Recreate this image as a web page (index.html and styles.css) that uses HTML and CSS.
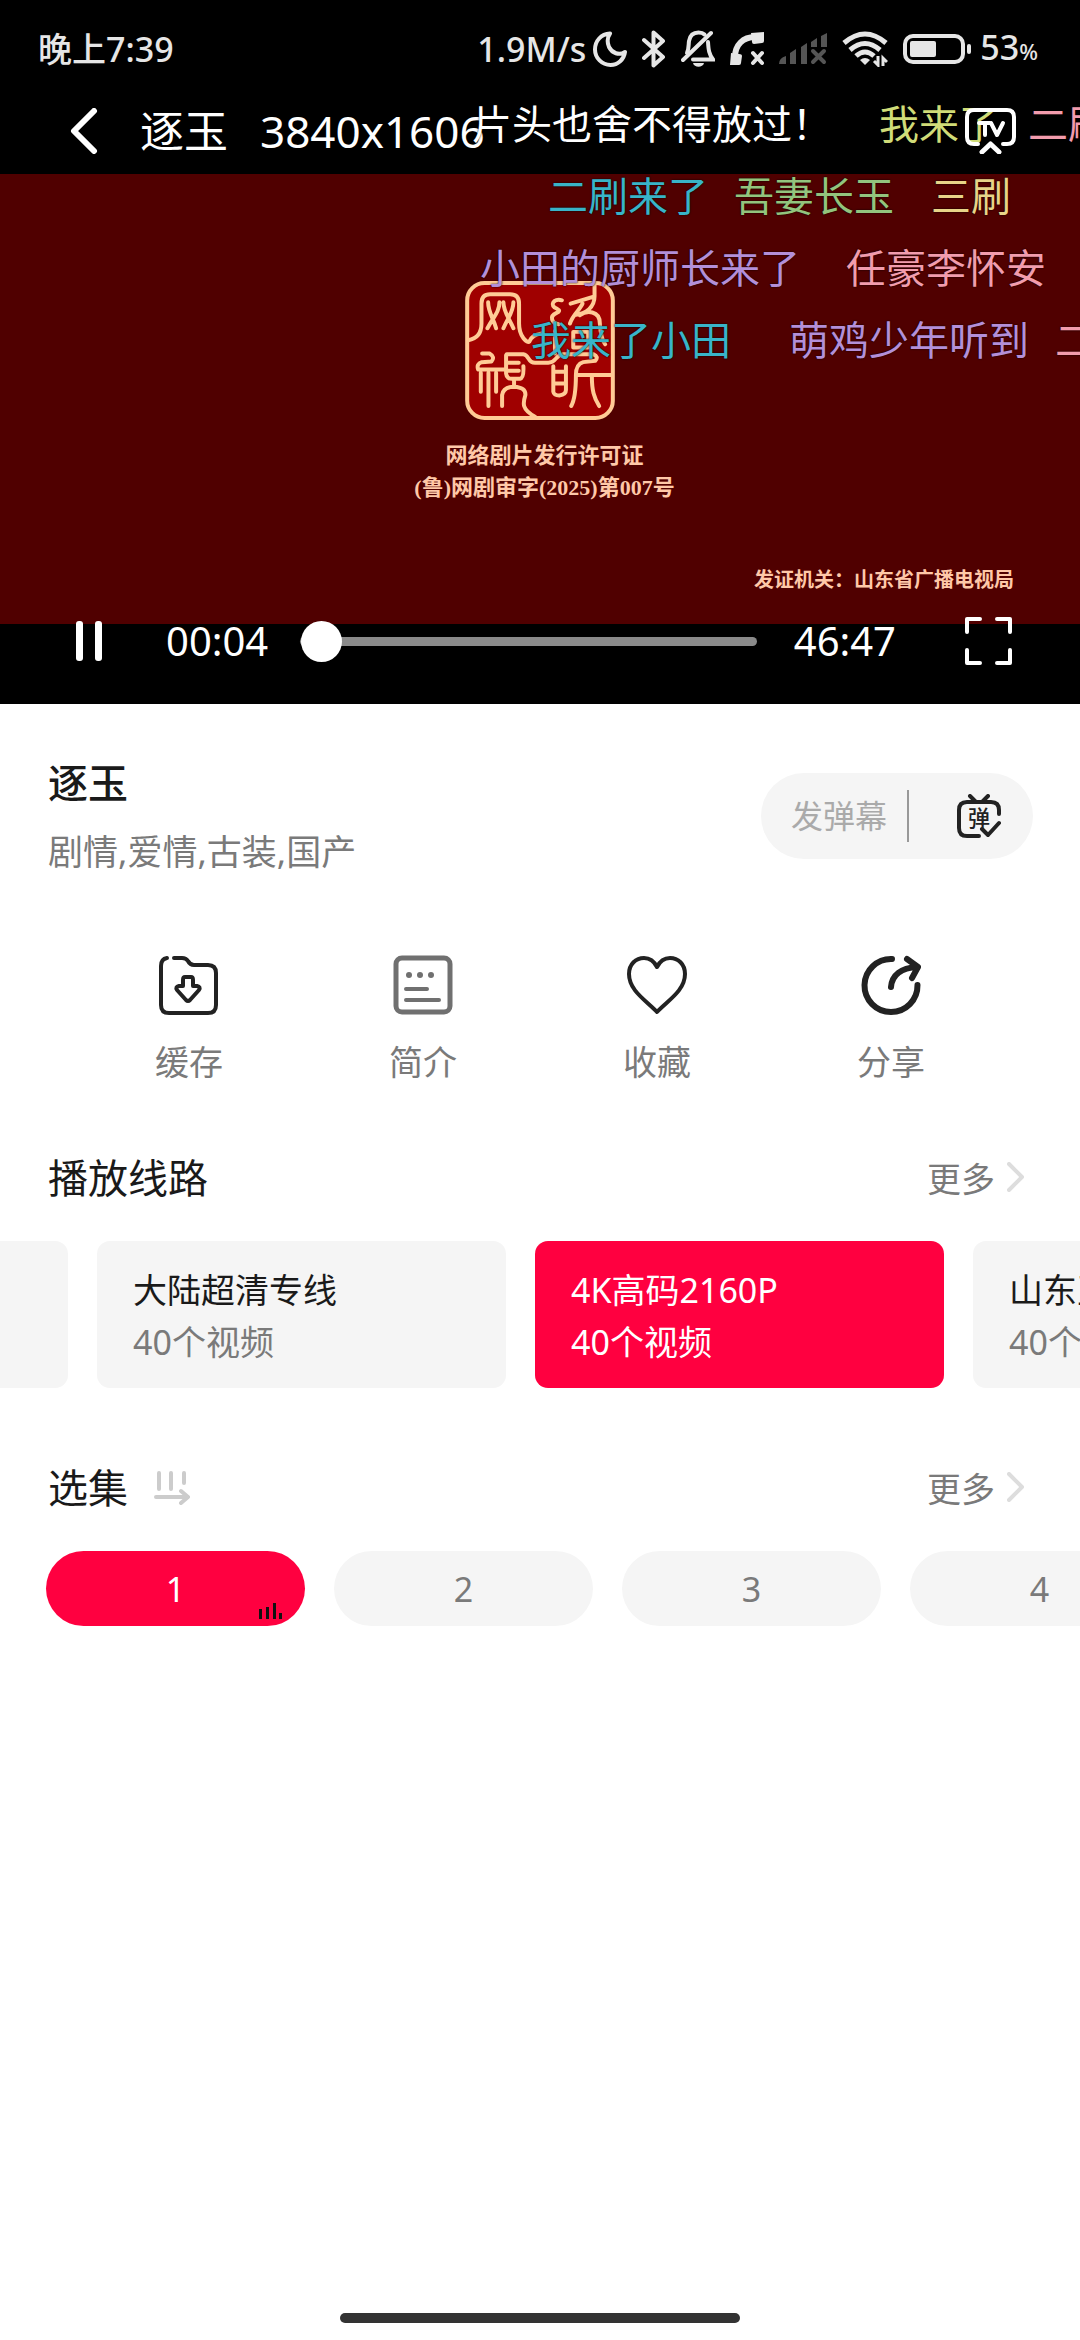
FILE: index.html
```
<!DOCTYPE html>
<html lang="zh-CN">
<head>
    <meta charset="UTF-8">
    <meta name="viewport" content="width=device-width, initial-scale=1.0">
    <title>逐玉</title>
    <link rel="stylesheet" href="styles.css">
</head>
<body>

    <div class="player">
        <div class="status-bar">
            <span class="clock">晚上7:39</span>
            <div class="status-icons">
                <span class="speed">1.9M/s</span>
                <svg width="34" height="36" viewBox="0 0 34 36" fill="none" stroke="#e6e6e6" stroke-width="4" stroke-linejoin="round"><path d="M17 2.5C8 3 2 10 2 18.500C2 27 9 34 17.500 34C25 34 31 28.500 32 21C26 25 19 22 16 16C14 11 14.500 6 17 2.500Z"/></svg>
                <svg width="24" height="38" viewBox="0 0 24 38" fill="none" stroke="#e6e6e6" stroke-width="4" stroke-linejoin="round" stroke-linecap="round"><path d="M2 10L21 27L11.500 35.500V2.500L21 11L2 28"/></svg>
                <svg width="34" height="38" viewBox="0 0 34 38" fill="none" stroke="#e6e6e6" stroke-width="4" stroke-linecap="round"><path d="M6 23C8 19 7.500 14 8 11C9 5 13 2.500 17.500 2.500C20 2.500 22 3 23.500 4.500"/><path d="M27 12C27.500 20 28 24 32 29.500H12"/><path d="M2 30L30 3"/><path d="M12 33H23C22 38 13 38 12 33Z" fill="#e6e6e6" stroke="none"/></svg>
                <svg width="34" height="34" viewBox="0 0 34 34" fill="none" stroke="#e6e6e6"><path d="M5 25C5 13 13 5 25 5" stroke-width="6"/><path d="M21 1L34 0V9Q34 11 32 11L24 12Q22 12 22 10ZM1 21L9 22Q12 22 12 24L11 31Q11 33 9 33H0Z" fill="#e6e6e6" stroke="none"/><path d="M23 21L32 31M32 21L23 31" stroke-width="4" stroke-linecap="round"/></svg>
                <svg width="48" height="32" viewBox="0 0 48 32" fill="#555"><path d="M0 31Q0 25 7 23V31ZM11 20L17 16V31H11ZM22 14L28 10V31H22ZM32 9L38 5V14H32ZM42 3L48 0V14H42Z"/><path d="M34 18L45 29M45 18L34 29" stroke="#555" stroke-width="4" stroke-linecap="round"/></svg>
                <svg width="46" height="36" viewBox="0 0 46 36" fill="none" stroke="#e6e6e6" stroke-width="5"><path d="M2 12Q23 -6 44 12"/><path d="M8 19Q23 6 38 19"/><path d="M14 25Q23 17 32 25"/><path d="M23 34L18 29Q23 25 28 29Z" fill="#e6e6e6" stroke="none"/><path d="M36 25V34L32 30M41 35V27L45 31" stroke-width="3"/></svg>
                <svg width="68" height="30" viewBox="0 0 68 30"><rect x="2" y="2" width="58" height="26" rx="8" fill="none" stroke="#e6e6e6" stroke-width="4"/><rect x="7" y="7" width="26" height="16" rx="2" fill="#e6e6e6"/><rect x="64" y="10" width="4" height="10" rx="2" fill="#e6e6e6"/></svg>
                <span class="battery">53<small>%</small></span>
            </div>
        </div>

        <div class="player-header">
            <button class="icon-button" aria-label="返回">
                <svg width="28" height="46" viewBox="0 0 28 46" fill="none" stroke="#fff" stroke-width="6" stroke-linecap="round" stroke-linejoin="round"><path d="M24 3L4 23L24 43"/></svg>
            </button>
            <h1>逐玉</h1>
            <span class="resolution">3840x1606</span>
            <button class="icon-button cast" aria-label="投屏">
                <svg width="51" height="46" viewBox="0 0 51 46" fill="none" stroke="#fff" stroke-width="4" stroke-linecap="round" stroke-linejoin="round"><path d="M13 36H9Q2 36 2 29V9Q2 2 9 2H42Q49 2 49 9V29Q49 36 42 36H38"/><path d="M17 44L25.500 36L34 44" stroke-width="5"/><path d="M14 15H25M20 15V27M26 15L32 27L38 15"/></svg>
            </button>
        </div>

        <div class="video">
            <!-- 发行许可印章 -->
            <svg class="stamp" width="150" height="139" viewBox="75 62 450 418" fill="none" stroke="#ffcb96" stroke-width="12" stroke-linecap="round" stroke-linejoin="round">
                <rect x="81" y="68" width="438" height="406" rx="52" fill="#a00000"/>
                <path d="M84 240C110 236 124 218 124 190V130Q124 102 150 102H210Q237 102 237 130V190C237 230 262 250 268 244C274 228 290 222 305 220"/>
                <path d="M144 126C144 155 160 175 168 204M178 126C178 155 160 170 142 204M190 126C190 155 208 175 220 204M220 126C220 155 205 170 190 204"/>
                <path d="M366 120C340 112 326 138 352 146Q364 152 350 158C326 168 336 190 356 192M392 130L464 108V72M464 108C464 140 440 160 405 164M428 130C420 150 400 160 390 190M420 165C440 150 480 150 480 190C482 220 486 240 496 252M345 212V280M400 215H445V262H400Z"/>
                <path d="M126 280H148Q166 290 154 304L125 306Q108 312 114 328H195M122 338V395M145 338V438M168 338V395M200 282H250C268 284 262 308 285 308H325C350 308 345 284 370 282H460Q478 290 466 302L430 306Q408 312 408 345C408 390 404 420 394 438"/>
                <path d="M198 285V340Q200 358 218 356H240Q252 354 250 318M205 308H236M205 332H236M222 358V380M186 438V405Q190 380 222 380Q258 382 256 405C248 430 245 448 285 470"/>
                <path d="M340 318V395Q342 406 358 406Q378 404 378 390V318M340 335H378M340 370H378M412 345H515M456 350C456 390 462 412 478 438"/>
            </svg>
            <p class="permit">网络剧片发行许可证<br>(鲁)网剧审字(2025)第007号</p>
            <p class="issuer">发证机关：山东省广播电视局</p>
        </div>

        <div class="danmaku">
            <div class="lane"><span class="c-white d1">片头也舍不得放过！</span><span class="c-lime d2">我来了</span><span class="c-pink d3">二刷</span></div>
            <div class="lane"><span class="c-teal d4">二刷来了</span><span class="c-green d5">吾妻长玉</span><span class="c-yellow d6">三刷</span></div>
            <div class="lane"><span class="c-purple d7">小田的厨师长来了</span><span class="c-pink d8">任豪李怀安</span></div>
            <div class="lane"><span class="c-teal d9">我来了小田</span><span class="c-purple d10">萌鸡少年听到</span><span class="c-pink d11">二刷</span></div>
        </div>

        <div class="controls">
            <button class="icon-button" aria-label="暂停">
                <svg width="26" height="40" viewBox="0 0 26 40" fill="#fff"><rect width="7" height="40" rx="3"/><rect x="19" width="7" height="40" rx="3"/></svg>
            </button>
            <span class="time current">00:04</span>
            <input class="seek" type="range" min="0" max="2807" value="4" aria-label="播放进度">
            <span class="time total">46:47</span>
            <button class="icon-button" aria-label="全屏">
                <svg width="47" height="48" viewBox="0 0 47 48" fill="none" stroke="#fff" stroke-width="4" stroke-linecap="round" stroke-linejoin="round"><path d="M2 15V2H15M32 2H45V15M45 33V46H32M15 46H2V33"/></svg>
            </button>
        </div>
    </div>

    <div class="info">
        <div>
            <h2>逐玉</h2>
            <p class="genre">剧情,爱情,古装,国产</p>
        </div>
        <div class="send-box">
            <input type="text" placeholder="发弹幕" aria-label="发弹幕">
            <button class="icon-button" aria-label="弹幕开关">
                <svg width="44" height="44" viewBox="0 0 44 44" fill="none" stroke="#222" stroke-width="4" stroke-linecap="round" stroke-linejoin="round"><path d="M22 42H10Q2 42 2 34V16Q2 8 10 8H34Q42 8 42 16V20M13 2L19 8M31 2L25 8M25 35L31 41L42 29"/><text x="22" y="32" text-anchor="middle" class="dan">弹</text></svg>
            </button>
        </div>
    </div>

    <div class="actions">
        <button>
            <svg width="60" height="60" viewBox="0 0 60 60" fill="none" stroke="#222" stroke-width="4" stroke-linecap="round" stroke-linejoin="round"><path d="M8 3Q2 4 2 11V50Q2 58 10 58H49Q57 58 57 50V18Q57 10 49 10H35Q31 10 29 6Q27 3 23 3H15"/><path d="M26 22H32Q34 22 34 25V31H38Q42 32 40 35L31 45Q29 47 27 45L18 35Q16 32 20 31H24V25Q24 22 26 22Z"/></svg>
            缓存
        </button>
        <button>
            <svg width="60" height="60" viewBox="0 0 60 60" fill="none" stroke="#707070" stroke-width="4" stroke-linecap="round"><rect x="3" y="3" width="54" height="54" rx="6" stroke-width="5"/><path d="M13 34H34M13 45H46"/><g fill="#707070" stroke="none"><circle cx="16" cy="20" r="3"/><circle cx="27" cy="20" r="3"/><circle cx="38" cy="20" r="3"/></g></svg>
            简介
        </button>
        <button>
            <svg width="60" height="60" viewBox="0 0 60 60" fill="none" stroke="#222" stroke-width="4" stroke-linejoin="round"><path d="M30 57C20 46 2 36 2 19C2 9 9 3 17 3C23 3 27 6 30 12C33 6 37 3 43 3C51 3 58 9 58 19C58 36 40 46 30 57Z"/></svg>
            收藏
        </button>
        <button>
            <svg width="60" height="60" viewBox="0 0 60 60" fill="none" stroke="#222" stroke-width="6" stroke-linecap="round" stroke-linejoin="round"><path d="M31 4A26.500 26.500 0 1 0 56.500 30"/><path d="M30 32C31 20 40 13 56 12M46 4L57 12L51 23"/></svg>
            分享
        </button>
    </div>

    <div class="section-head">
        <h3>播放线路</h3>
        <a href="#" class="more">更多 <svg width="18" height="30" viewBox="0 0 18 30" fill="none" stroke="#ddd" stroke-width="4" stroke-linecap="round" stroke-linejoin="round"><path d="M2 2L15 15L2 28"/></svg></a>
    </div>
    <div class="scroller">
        <div class="lines">
            <button class="line" aria-label="线路"></button>
            <button class="line">大陆超清专线<span>40个视频</span></button>
            <button class="line active">4K高码2160P<span>40个视频</span></button>
            <button class="line">山东互联<span>40个视频</span></button>
        </div>
    </div>

    <div class="section-head episodes-head">
        <h3>选集</h3>
        <button class="icon-button" aria-label="排序">
            <svg width="36" height="34" viewBox="0 0 36 34" fill="none" stroke="#ccc" stroke-width="4" stroke-linecap="round" stroke-linejoin="round"><path d="M5 2V18M17 2V18M30 2V12M2 26H33M27 20L34 26L27 32"/></svg>
        </button>
        <a href="#" class="more">更多 <svg width="18" height="30" viewBox="0 0 18 30" fill="none" stroke="#ddd" stroke-width="4" stroke-linecap="round" stroke-linejoin="round"><path d="M2 2L15 15L2 28"/></svg></a>
    </div>
    <div class="scroller">
        <div class="episodes">
            <button class="episode active">1
                <svg class="playing" width="24" height="16" viewBox="0 0 24 16" fill="#111"><rect y="6" width="3" height="10"/><rect x="7" y="4" width="3" height="12"/><rect x="14" width="3" height="16"/><rect x="20" y="10" width="3" height="6"/></svg>
            </button>
            <button class="episode">2</button>
            <button class="episode">3</button>
            <button class="episode">4</button>
        </div>
    </div>

    <div class="home-bar"></div>

</body>
</html>
```

FILE: styles.css
```
* {
    box-sizing: border-box;
}

body {
    margin: 0;
    min-height: 100vh;
    display: flex;
    flex-direction: column;
    background-color: #fff;
    color: #1a1a1a;
    font-family: "Noto Sans", "Noto Sans CJK SC", sans-serif;
    font-size: 34px;
}

h1, h2, h3, p {
    margin: 0;
    font-weight: 400;
}

svg {
    display: block;
    flex-shrink: 0;
}

button {
    padding: 0;
    border: none;
    background: none;
    color: inherit;
    font: inherit;
    cursor: pointer;
}

/* 播放器 */
.player {
    position: relative;
    padding-bottom: 80px;
    background-color: #000;
    color: #fff;
    overflow: hidden;
}

.status-bar {
    display: flex;
    align-items: center;
    justify-content: space-between;
    height: 98px;
    padding: 0 42px 0 38px;
    color: #e6e6e6;
    font-weight: 500;
    line-height: 48px;
}

.status-icons {
    display: flex;
    align-items: center;
    gap: 15px;
}

.speed {
    margin-right: -8px;
}

.battery {
    margin-left: -6px;
}

.battery small {
    font-size: 22px;
}

.player-header {
    display: flex;
    align-items: center;
    height: 76px;
    padding: 0 64px 10px 70px;
    font-size: 44px;
    line-height: 60px;
}

.player-header h1 {
    margin-left: 42px;
    font-size: 44px;
}

.resolution {
    margin-left: 32px;
}

.cast {
    position: relative;
    z-index: 2;
    margin-left: auto;
}

.video {
    display: flex;
    flex-direction: column;
    align-items: center;
    height: 450px;
    padding-top: 107px;
    background-color: #500000;
    color: #ffc8a8;
    font-family: "Liberation Serif", "Noto Sans CJK SC", serif;
    font-weight: 700;
}

.video p {
    font-weight: 700;
}

.permit {
    margin-top: 20px;
    padding-left: 9px;
    font-size: 22px;
    line-height: 32px;
    text-align: center;
}

.issuer {
    align-self: flex-end;
    margin-top: 60px;
    padding-right: 66px;
    font-size: 20px;
    line-height: 32px;
}

/* 弹幕层 */
.danmaku {
    position: absolute;
    top: 88px;
    left: 0;
    right: 0;
    font-size: 40px;
    line-height: 72px;
    white-space: nowrap;
    text-shadow: 0 0 2px #000;
}

.lane {
    position: relative;
    height: 72px;
}

.lane span {
    position: absolute;
    top: 0;
}

.c-white { color: #fff; }
.c-lime { color: #d0dc78; }
.c-pink { color: #f29cad; }
.c-teal { color: #39b4c8; }
.c-green { color: #93c47d; }
.c-yellow { color: #e8d488; }
.c-purple { color: #b48fd8; }

.d1 { left: 472px; }
.d2 { left: 879px; }
.d3 { left: 1028px; }
.d4 { left: 548px; }
.d5 { left: 734px; }
.d6 { left: 931px; }
.d7 { left: 480px; }
.d8 { left: 846px; }
.d9 { left: 531px; }
.d10 { left: 789px; }
.d11 { left: 1055px; }

.controls {
    position: absolute;
    left: 0;
    right: 0;
    bottom: 0;
    display: flex;
    align-items: center;
    height: 126px;
    padding: 0 68px 0 76px;
}

.time {
    font-size: 40px;
    line-height: 56px;
}

.current {
    margin: 0 32px 0 64px;
}

.total {
    margin: 0 69px 0 37px;
}

.seek {
    flex: 1;
    min-width: 0;
    height: 42px;
    margin: 0;
    background: none;
    -webkit-appearance: none;
    appearance: none;
}

.seek::-webkit-slider-runnable-track {
    height: 9px;
    border-radius: 5px;
    background-color: #8a8a8a;
}

.seek::-webkit-slider-thumb {
    -webkit-appearance: none;
    width: 41px;
    height: 41px;
    margin-top: -16px;
    border-radius: 50%;
    background-color: #fff;
}

/* 影片信息 */
.info {
    display: flex;
    align-items: center;
    justify-content: space-between;
    padding: 51px 47px 0 48px;
}

.info h2 {
    font-size: 40px;
    font-weight: 500;
    line-height: 56px;
}

.genre {
    margin-top: 17px;
    color: #7a7a7a;
    font-size: 35px;
    line-height: 48px;
}

.send-box {
    display: flex;
    align-items: center;
    justify-content: space-between;
    width: 272px;
    height: 86px;
    padding: 0 32px 0 30px;
    border-radius: 43px;
    background-color: #f5f5f5;
}

.send-box input {
    width: 118px;
    height: 52px;
    padding: 0;
    border: none;
    border-right: 2px solid #999;
    background: none;
    font-family: inherit;
    font-size: 32px;
}

.send-box input::placeholder {
    color: #aaa;
}

.dan {
    fill: #222;
    stroke: none;
    font-size: 22px;
    font-weight: 500;
}

.actions {
    display: grid;
    grid-template-columns: repeat(4, 1fr);
    margin-top: 79px;
    padding: 0 72px;
}

.actions button {
    display: flex;
    flex-direction: column;
    align-items: center;
    gap: 24px;
    color: #7a7a7a;
    line-height: 46px;
}

/* 线路和选集 */
.section-head {
    display: flex;
    align-items: center;
    margin: 65px 0 35px;
    padding: 0 55px 0 48px;
}

.episodes-head {
    margin-top: 72px;
}

.section-head h3 {
    font-size: 40px;
    line-height: 56px;
}

.section-head button {
    margin-left: 26px;
}

.more {
    display: flex;
    align-items: center;
    gap: 12px;
    margin-left: auto;
    padding-bottom: 2px;
    color: #7a7a7a;
    text-decoration: none;
}

.scroller {
    overflow: hidden;
}

.lines,
.episodes {
    display: flex;
    gap: 29px;
}

/* 滚动到当前线路 */
.lines {
    margin-left: -341px;
}

.line {
    flex: 0 0 409px;
    height: 147px;
    padding: 2px 36px 0;
    border-radius: 13px;
    background-color: #f5f5f5;
    line-height: 52px;
    text-align: left;
    white-space: nowrap;
}

.line span {
    display: block;
    color: #7a7a7a;
}

.episodes {
    padding-left: 46px;
}

.episode {
    position: relative;
    flex: 0 0 259px;
    height: 75px;
    border-radius: 38px;
    background-color: #f5f5f5;
    color: #7a7a7a;
}

.line.active,
.line.active span,
.episode.active {
    background-color: #ff0040;
    color: #fff;
}

.playing {
    position: absolute;
    right: 22px;
    bottom: 7px;
}

.home-bar {
    width: 400px;
    height: 10px;
    margin: auto auto 17px;
    border-radius: 5px;
    background-color: #333;
}
```
